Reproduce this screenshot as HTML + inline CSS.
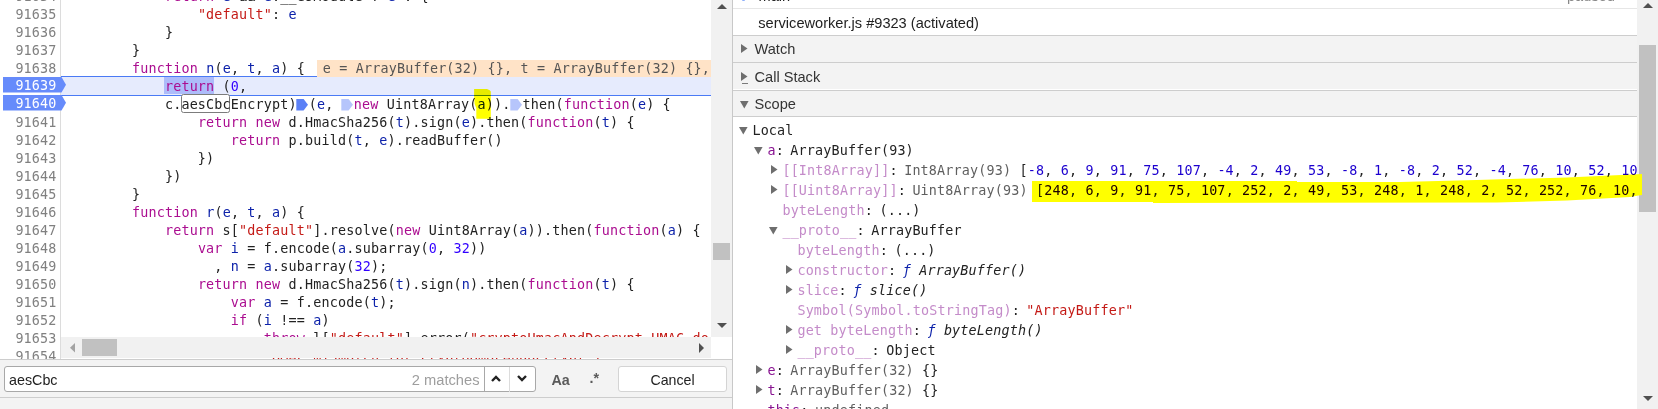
<!DOCTYPE html>
<html>
<head>
<meta charset="utf-8">
<title>DevTools - serviceworker.js</title>
<style>
:root{--mono:"DejaVu Sans Mono","Liberation Mono",monospace;--ms:13.4px;--ls:0.18px;--ui:"Liberation Sans",sans-serif;}
html,body{margin:0;padding:0;}
body{width:1658px;height:409px;overflow:hidden;background:#fff;position:relative;font-family:var(--ui);color:#222;}
.abs{position:absolute;}
#code{position:absolute;left:0;top:0;width:711px;height:359px;overflow:hidden;background:#fff;}
#gutter{position:absolute;left:0;top:0;width:60px;height:359px;border-right:1px solid #dcdcdc;background:#fff;z-index:1;}
.ln,.cl{position:absolute;height:18px;line-height:18px;font-family:var(--mono);font-size:var(--ms);letter-spacing:var(--ls);white-space:pre;}
.ln{left:0;width:56.6px;text-align:right;color:#808080;z-index:3;}
.cl{left:66px;color:#222;z-index:2;}
.k{color:#ab0d90;}.d{color:#0d22aa;}.s{color:#c41a16;}.n{color:#3200ff;}
.bp{position:absolute;left:3px;width:63px;height:15.7px;z-index:2;}
.ln.w{color:#fff;}
#exec{position:absolute;left:61px;top:76px;width:650px;height:18px;border-top:1px solid #4a7af5;border-bottom:1px solid #4a7af5;background:#e6ebfd;z-index:0;}
#tok{position:absolute;left:164.2px;top:77px;width:49.5px;height:17px;background:#adbcfa;z-index:1;}
svg.im{position:static;display:inline-block;width:12.4px;height:11.5px;vertical-align:-1.5px;margin-left:-0.6px;margin-right:0.24px;}
#vals{position:absolute;left:317px;top:59.5px;width:394px;height:17px;line-height:18.8px;background:#ffe3c7;z-index:1;font-family:var(--mono);font-size:var(--ms);letter-spacing:var(--ls);white-space:pre;color:#555;overflow:hidden;}
#sh{position:absolute;left:181.1px;top:94.2px;width:46.5px;height:16.4px;border:1px solid #7c7c7c;border-radius:2.5px;z-index:1;background:#fff;}
.track{position:absolute;background:#f1f1f1;}
.thumb{position:absolute;background:#c1c1c1;}
#search{position:absolute;left:0;top:359px;width:732px;height:37px;background:#f3f3f3;border-top:1px solid #cdcdcd;border-bottom:1px solid #cdcdcd;}
#below{position:absolute;left:0;top:398px;width:732px;height:11px;background:#f3f3f3;}
#vdiv{position:absolute;left:732px;top:0;width:1px;height:409px;background:#c8c8c8;}
#right{position:absolute;left:733px;top:0;width:904px;height:409px;overflow:hidden;background:#fff;}
.hdr{position:absolute;left:0;width:904px;height:26px;background:#f3f3f3;border-top:1px solid #cdcdcd;font-size:14.6px;line-height:26px;color:#333;}
.hdr span{position:absolute;left:21.5px;top:0.4px;}
.row{position:absolute;height:20px;line-height:20px;font-family:var(--mono);font-size:var(--ms);letter-spacing:var(--ls);white-space:pre;color:#222;}
.p{color:#881391;}.pd{color:#c48bc9;}.g{color:#5f5f5f;}.f{color:#0d22aa;font-style:italic;}.fi{font-style:italic;}
svg{position:absolute;overflow:visible;}
.rn{color:#1c00cf;}
.sep{margin-right:-1.9px;}
</style>
</head>
<body>

<div id="code">
<div id="gutter"></div><div id="exec"></div><div id="tok"></div>
<div id="vals"><span style="margin-left:-2.5px"> e = ArrayBuffer(32) {}, t = ArrayBuffer(32) {}, a = ArrayBuffer(93) {}</span></div>
<div class="ln" style="top:-12.4px">91634</div>
<div class="cl" style="top:-12.4px">            <span class="k">return</span> <span class="d">e</span> &amp;&amp; <span class="d">e</span>.__esModule ? <span class="d">e</span> : {</div>
<div class="ln" style="top:5.6px">91635</div>
<div class="cl" style="top:5.6px">                <span class="s">"default"</span>: <span class="d">e</span></div>
<div class="ln" style="top:23.6px">91636</div>
<div class="cl" style="top:23.6px">            }</div>
<div class="ln" style="top:41.6px">91637</div>
<div class="cl" style="top:41.6px">        }</div>
<div class="ln" style="top:59.6px">91638</div>
<div class="cl" style="top:59.6px">        <span class="k">function</span> <span class="d">n</span>(<span class="d">e</span>, <span class="d">t</span>, <span class="d">a</span>) {</div>
<svg class="bp" style="top:76.8px" viewBox="0 0 63 15.5"><path d="M0 0H58.5L63 7.75L58.5 15.5H0Z" fill="#668bfb"/></svg>
<div class="ln w" style="top:76.6px">91639</div>
<div class="cl" style="top:77.6px">            <span class="k">return</span> (<span class="n">0</span>,</div>
<svg class="bp" style="top:95.1px" viewBox="0 0 63 15.5"><path d="M0 0H58.5L63 7.75L58.5 15.5H0Z" fill="#668bfb"/></svg>
<div class="ln w" style="top:94.6px">91640</div>
<div class="cl" style="top:95.6px">            c.aesCbcEncrypt)<svg class="im" viewBox="0 0 12.4 11.5"><path d="M0.3 0H7.6L12 5.75L7.6 11.5H0.3Z" fill="#5b80f6"/></svg>(<span class="d">e</span>, <svg class="im" viewBox="0 0 12.4 11.5"><path d="M0.3 0H7.6L12 5.75L7.6 11.5H0.3Z" fill="#b6c5fb"/></svg><span class="k">new</span> Uint8Array(<span class="d">a</span>)).<svg class="im" viewBox="0 0 12.4 11.5"><path d="M0.3 0H7.6L12 5.75L7.6 11.5H0.3Z" fill="#b6c5fb"/></svg>then(<span class="k">function</span>(<span class="d">e</span>) {</div>
<div class="ln" style="top:113.6px">91641</div>
<div class="cl" style="top:113.6px">                <span class="k">return</span> <span class="k">new</span> d.HmacSha256(<span class="d">t</span>).sign(<span class="d">e</span>).then(<span class="k">function</span>(<span class="d">t</span>) {</div>
<div class="ln" style="top:131.6px">91642</div>
<div class="cl" style="top:131.6px">                    <span class="k">return</span> p.build(<span class="d">t</span>, <span class="d">e</span>).readBuffer()</div>
<div class="ln" style="top:149.6px">91643</div>
<div class="cl" style="top:149.6px">                })</div>
<div class="ln" style="top:167.6px">91644</div>
<div class="cl" style="top:167.6px">            })</div>
<div class="ln" style="top:185.6px">91645</div>
<div class="cl" style="top:185.6px">        }</div>
<div class="ln" style="top:203.6px">91646</div>
<div class="cl" style="top:203.6px">        <span class="k">function</span> <span class="d">r</span>(<span class="d">e</span>, <span class="d">t</span>, <span class="d">a</span>) {</div>
<div class="ln" style="top:221.6px">91647</div>
<div class="cl" style="top:221.6px">            <span class="k">return</span> s[<span class="s">"default"</span>].resolve(<span class="k">new</span> Uint8Array(<span class="d">a</span>)).then(<span class="k">function</span>(<span class="d">a</span>) {</div>
<div class="ln" style="top:239.6px">91648</div>
<div class="cl" style="top:239.6px">                <span class="k">var</span> <span class="d">i</span> = f.encode(<span class="d">a</span>.subarray(<span class="n">0</span>, <span class="n">32</span>))</div>
<div class="ln" style="top:257.6px">91649</div>
<div class="cl" style="top:257.6px">                  , <span class="d">n</span> = <span class="d">a</span>.subarray(<span class="n">32</span>);</div>
<div class="ln" style="top:275.6px">91650</div>
<div class="cl" style="top:275.6px">                <span class="k">return</span> <span class="k">new</span> d.HmacSha256(<span class="d">t</span>).sign(<span class="d">n</span>).then(<span class="k">function</span>(<span class="d">t</span>) {</div>
<div class="ln" style="top:293.6px">91651</div>
<div class="cl" style="top:293.6px">                    <span class="k">var</span> <span class="d">a</span> = f.encode(<span class="d">t</span>);</div>
<div class="ln" style="top:311.6px">91652</div>
<div class="cl" style="top:311.6px">                    <span class="k">if</span> (<span class="d">i</span> !== <span class="d">a</span>)</div>
<div class="ln" style="top:329.6px">91653</div>
<div class="cl" style="top:329.6px">                        <span class="k">throw</span> l[<span class="s">"default"</span>].error(<span class="s">"cryptoHmacAndDecrypt HMAC do not match, ")</span></div>
<div class="ln" style="top:347.6px">91654</div>
<div class="cl" style="top:347.6px">                        <span class="s">"HMAC mismatch for cryptoHmacAndDecrypt")</span>;</div>
<div id="sh"></div>
<svg style="left:0;top:0;z-index:4;mix-blend-mode:multiply" width="711" height="359"><path d="M474.1 89L487 89L489.7 90.3L490.8 91.5L490.8 118.7L476.3 118.7L476.3 108L474.6 104L474.1 96Z" fill="#ffff00"/></svg>
<div class="track" style="left:61px;top:337px;width:650px;height:21px;z-index:5"></div>
<div class="thumb" style="left:82px;top:339px;width:35px;height:17px;z-index:6"></div>
<svg style="left:69.5px;top:342.8px;z-index:6" width="5" height="10"><path d="M5 0V9.6L0 4.8Z" fill="#a3a3a3"/></svg>
<svg style="left:698.5px;top:342.5px;z-index:6" width="5" height="10"><path d="M0 0V10L5 5Z" fill="#505050"/></svg>
</div>
<div class="track" style="left:711px;top:0;width:21px;height:337px"></div>
<div class="thumb" style="left:713px;top:243px;width:17px;height:17px"></div>
<svg style="left:716.5px;top:4px" width="10" height="5"><path d="M0 5H10L5 0Z" fill="#505050"/></svg>
<svg style="left:716.5px;top:322.5px" width="10" height="5"><path d="M0 0H10L5 5Z" fill="#505050"/></svg>
<div id="vdiv"></div>
<div id="search">
<div class="abs" style="left:4px;top:5.5px;width:530px;height:24px;border:1px solid #a8a8a8;border-radius:3px;background:#fff"></div>
<div class="abs" style="left:9px;top:7px;height:26px;line-height:26px;font-size:14.3px;color:#222">aesCbc</div>
<div class="abs" style="left:380px;top:7px;width:99.5px;text-align:right;height:26px;line-height:26px;font-size:14.7px;color:#9e9e9e">2 matches</div>
<div class="abs" style="left:484px;top:7px;width:1px;height:25px;background:#a8a8a8"></div>
<div class="abs" style="left:509px;top:7px;width:1px;height:25px;background:#dcdcdc"></div>
<svg style="left:491px;top:15px" width="10" height="7"><path d="M1 6L5 2L9 6" fill="none" stroke="#222" stroke-width="2.4"/></svg>
<svg style="left:516.5px;top:15px" width="10" height="7"><path d="M1 1L5 5L9 1" fill="none" stroke="#222" stroke-width="2.4"/></svg>
<div class="abs" style="left:551.5px;top:7px;height:26px;line-height:26px;font-size:14.3px;font-weight:bold;color:#5a5a5a">Aa</div>
<div class="abs" style="left:589.5px;top:5px;height:26px;line-height:26px;font-size:14.3px;font-weight:bold;color:#5a5a5a">.*</div>
<div class="abs" style="left:618px;top:5.5px;width:107px;height:24px;border:1px solid #d4d4d4;border-radius:3px;background:#fff;text-align:center;line-height:26.6px;font-size:14.2px;color:#222">Cancel</div>
</div><div id="below"></div>
<div id="right">
<div class="abs" style="left:9px;top:-2.5px;width:2.6px;height:3.5px;background:#8fb0fa;border-radius:1px"></div>
<div class="abs" style="left:25.5px;top:-13px;font-size:14.6px;line-height:18px;color:#222">main</div>
<div class="abs" style="left:834px;top:-13px;font-size:14.6px;line-height:18px;color:#888">paused</div>
<div class="abs" style="left:0;top:8px;width:904px;height:1px;background:#e6e6e6"></div>
<div class="abs" style="left:25.3px;top:10px;font-size:14.6px;line-height:26px;color:#222">serviceworker.js #9323 (activated)</div>
<div class="hdr" style="top:35px"><svg style="left:8.2px;top:8.3px" width="7" height="9"><path d="M0 0V9L6.5 4.5Z" fill="#6e6e6e"/></svg><span style="top:0.4px">Watch</span></div>
<div class="hdr" style="top:62px"><svg style="left:8.2px;top:9.0px" width="7" height="9"><path d="M0 0V9L6.5 4.5Z" fill="#6e6e6e"/></svg><span style="top:1.4px">Call Stack</span></div>
<div class="hdr" style="top:90px"><svg style="left:7.1px;top:9.7px" width="9" height="8"><path d="M0 0H8.6L4.3 7.5Z" fill="#6e6e6e"/></svg><span style="top:0.4px">Scope</span></div>
<div class="abs" style="left:8.8px;top:83px;width:6.6px;height:1px;background:#7a7a7a"></div>
<div class="abs" style="left:0;top:116px;width:904px;height:1px;background:#cdcdcd"></div>
<svg style="left:6.300000000000001px;top:127px" width="9" height="8"><path d="M0 0H8.6L4.3 7.5Z" fill="#6e6e6e"/></svg>
<div class="row" style="left:19.4px;top:120.5px">Local</div>
<svg style="left:21.3px;top:147px" width="9" height="8"><path d="M0 0H8.6L4.3 7.5Z" fill="#6e6e6e"/></svg>
<div class="row" style="left:34.4px;top:140.5px"><span class="p">a</span><span class="sep">: </span>ArrayBuffer(93)</div>
<svg style="left:37.8px;top:165px" width="7" height="9"><path d="M0 0V9L6.5 4.5Z" fill="#6e6e6e"/></svg>
<div class="row" style="left:49.4px;top:160.5px"><span class="pd">[[Int8Array]]</span><span class="sep">: </span><span class="g">Int8Array(93) </span>[<span class="rn">-8</span>, <span class="rn">6</span>, <span class="rn">9</span>, <span class="rn">91</span>, <span class="rn">75</span>, <span class="rn">107</span>, <span class="rn">-4</span>, <span class="rn">2</span>, <span class="rn">49</span>, <span class="rn">53</span>, <span class="rn">-8</span>, <span class="rn">1</span>, <span class="rn">-8</span>, <span class="rn">2</span>, <span class="rn">52</span>, <span class="rn">-4</span>, <span class="rn">76</span>, <span class="rn">10</span>, <span class="rn">52</span>, <span class="rn">10</span>, <span class="rn">-8</span>, </div>
<svg style="left:37.8px;top:185px" width="7" height="9"><path d="M0 0V9L6.5 4.5Z" fill="#6e6e6e"/></svg>
<div class="row" style="left:49.4px;top:180.5px"><span class="pd">[[Uint8Array]]</span><span class="sep">: </span><span class="g">Uint8Array(93) </span>[<span class="rn">248</span>, <span class="rn">6</span>, <span class="rn">9</span>, <span class="rn">91</span>, <span class="rn">75</span>, <span class="rn">107</span>, <span class="rn">252</span>, <span class="rn">2</span>, <span class="rn">49</span>, <span class="rn">53</span>, <span class="rn">248</span>, <span class="rn">1</span>, <span class="rn">248</span>, <span class="rn">2</span>, <span class="rn">52</span>, <span class="rn">252</span>, <span class="rn">76</span>, <span class="rn">10</span>, <span class="rn">52</span>, <span class="rn">10</span>, </div>
<div class="row" style="left:49.4px;top:200.5px"><span class="pd">byteLength</span><span class="sep">: </span>(...)</div>
<svg style="left:36.3px;top:227px" width="9" height="8"><path d="M0 0H8.6L4.3 7.5Z" fill="#6e6e6e"/></svg>
<div class="row" style="left:49.4px;top:220.5px"><span class="pd">__proto__</span><span class="sep">: </span>ArrayBuffer</div>
<div class="row" style="left:64.4px;top:240.5px"><span class="pd">byteLength</span><span class="sep">: </span>(...)</div>
<svg style="left:52.8px;top:265px" width="7" height="9"><path d="M0 0V9L6.5 4.5Z" fill="#6e6e6e"/></svg>
<div class="row" style="left:64.4px;top:260.5px"><span class="pd">constructor</span><span class="sep">: </span><span class="f">ƒ</span> <span class="fi">ArrayBuffer()</span></div>
<svg style="left:52.8px;top:285px" width="7" height="9"><path d="M0 0V9L6.5 4.5Z" fill="#6e6e6e"/></svg>
<div class="row" style="left:64.4px;top:280.5px"><span class="pd">slice</span><span class="sep">: </span><span class="f">ƒ</span> <span class="fi">slice()</span></div>
<div class="row" style="left:64.4px;top:300.5px"><span class="pd">Symbol(Symbol.toStringTag)</span><span class="sep">: </span><span class="s">"ArrayBuffer"</span></div>
<svg style="left:52.8px;top:325px" width="7" height="9"><path d="M0 0V9L6.5 4.5Z" fill="#6e6e6e"/></svg>
<div class="row" style="left:64.4px;top:320.5px"><span class="pd">get byteLength</span><span class="sep">: </span><span class="f">ƒ</span> <span class="fi">byteLength()</span></div>
<svg style="left:52.8px;top:345px" width="7" height="9"><path d="M0 0V9L6.5 4.5Z" fill="#6e6e6e"/></svg>
<div class="row" style="left:64.4px;top:340.5px"><span class="pd">__proto__</span><span class="sep">: </span>Object</div>
<svg style="left:22.8px;top:365px" width="7" height="9"><path d="M0 0V9L6.5 4.5Z" fill="#6e6e6e"/></svg>
<div class="row" style="left:34.4px;top:360.5px"><span class="p">e</span><span class="sep">: </span><span class="g">ArrayBuffer(32) </span>{}</div>
<svg style="left:22.8px;top:385px" width="7" height="9"><path d="M0 0V9L6.5 4.5Z" fill="#6e6e6e"/></svg>
<div class="row" style="left:34.4px;top:380.5px"><span class="p">t</span><span class="sep">: </span><span class="g">ArrayBuffer(32) </span>{}</div>
<div class="row" style="left:34.4px;top:400.5px"><span class="p">this</span><span class="sep">: </span><span class="g">undefined</span></div>
<svg style="left:-733px;top:0;mix-blend-mode:multiply" width="1658" height="409"><path d="M1032 181L1297 181L1297 182L1400 182L1476 180L1567 177.4L1642 174L1642 195L1630 197L1567 200.5L1497 202.5L1153 203L1153 202L1032 202Z" fill="#ffff00"/></svg>
</div>
<div class="track" style="left:1637px;top:0;width:21px;height:409px"></div>
<div class="thumb" style="left:1639px;top:45px;width:17px;height:167px"></div>
<svg style="left:1642.7px;top:3px" width="10" height="5"><path d="M0 5H10L5 0Z" fill="#505050"/></svg>
<svg style="left:1642.7px;top:396px" width="10" height="5"><path d="M0 0H10L5 5Z" fill="#505050"/></svg>
<svg style="left:0;top:0" width="1658" height="409"><path d="M1637 174.2L1642 174L1642 195L1637 195.8Z" fill="#ffff00"/></svg>
</body>
</html>
